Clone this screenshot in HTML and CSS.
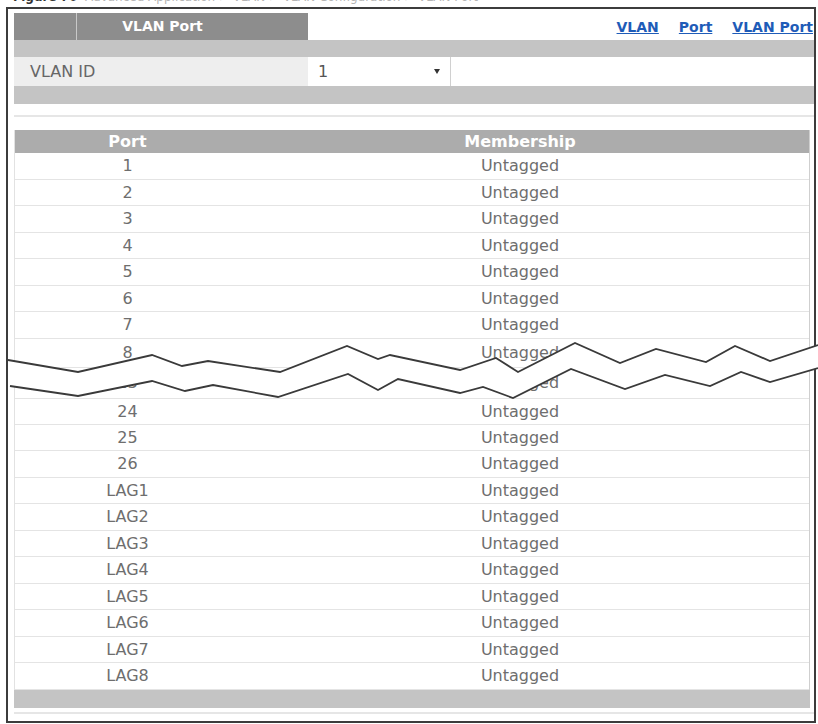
FILE: index.html
```html
<!DOCTYPE html>
<html lang="en">
<head>
<meta charset="UTF-8" />
<meta name="viewport" content="width=device-width, initial-scale=1" />
<title>VLAN Port</title>
<link rel="stylesheet" href="styles.css">
</head>
<body>
<div class="page">

  <!-- figure caption, cut off at the top -->
  <div class="caption"><p><b>Figure 70</b>&nbsp;&nbsp;Advanced Application &gt; VLAN &gt; VLAN Configuration &gt; VLAN Port</p></div>

  <div class="frame">
    <div class="top-row">
      <div class="tab"><span class="tab-edge"></span><span class="tab-title">VLAN Port</span></div>
      <nav class="links">
        <a href="#">VLAN</a>
        <a href="#">Port</a>
        <a href="#">VLAN Port</a>
      </nav>
    </div>
    <div class="bar"></div>

    <div class="vlan-row">
      <div class="vlan-label">VLAN ID</div>
      <div class="vlan-select"><span>1</span><i class="arrow"></i></div>
      <div class="vlan-rest"></div>
    </div>
    <div class="bar"></div>

    <div class="divider"></div>

    <div class="ports">
      <div class="row head"><div>Port</div><div>Membership</div></div>
      <div class="row"><div>1</div><div>Untagged</div></div>
      <div class="row"><div>2</div><div>Untagged</div></div>
      <div class="row"><div>3</div><div>Untagged</div></div>
      <div class="row"><div>4</div><div>Untagged</div></div>
      <div class="row"><div>5</div><div>Untagged</div></div>
      <div class="row"><div>6</div><div>Untagged</div></div>
      <div class="row"><div>7</div><div>Untagged</div></div>
      <div class="row tall"><div>8</div><div>Untagged</div></div>
      <div class="row taller"><div>23</div><div>Untagged</div></div>
      <div class="row mid"><div>24</div><div>Untagged</div></div>
      <div class="row"><div>25</div><div>Untagged</div></div>
      <div class="row"><div>26</div><div>Untagged</div></div>
      <div class="row"><div>LAG1</div><div>Untagged</div></div>
      <div class="row"><div>LAG2</div><div>Untagged</div></div>
      <div class="row"><div>LAG3</div><div>Untagged</div></div>
      <div class="row"><div>LAG4</div><div>Untagged</div></div>
      <div class="row"><div>LAG5</div><div>Untagged</div></div>
      <div class="row"><div>LAG6</div><div>Untagged</div></div>
      <div class="row"><div>LAG7</div><div>Untagged</div></div>
      <div class="row"><div>LAG8</div><div>Untagged</div></div>
    </div>
    <div class="bar short"></div>
    <div class="foot-line"></div>
  </div>

  <!-- torn-page break over the rows -->
  <svg class="break" width="818" height="80" viewBox="0 330 818 80">
    <polygon fill="#fff" points="8,360 78,372 152,355 182,366 208,361 280,372 347,346 378,359 390,355 460,370 496,358 518,372 575,343 620,363 656,349 706,362 735,346 770,361 818,345 818,368 770,382 741,372 710,386 665,375 625,389 571,369 513,398 483,387 460,393 398,379 378,390 348,374 278,397 213,385 185,391 152,381 78,396 10,386" />
    <polyline fill="none" stroke="#3a3a3a" stroke-width="1.8" points="8,360 78,372 152,355 182,366 208,361 280,372 347,346 378,359 390,355 460,370 496,358 518,372 575,343 620,363 656,349 706,362 735,346 770,361 818,345" />
    <polyline fill="none" stroke="#3a3a3a" stroke-width="1.8" points="10,386 78,396 152,381 185,391 213,385 278,397 348,374 378,390 398,379 460,393 483,387 513,398 571,369 625,389 665,375 710,386 741,372 770,382 818,368" />
  </svg>

</div>
</body>
</html>
```

FILE: styles.css
```css
/* Reset */
* {
  margin: 0; padding: 0; box-sizing: border-box;
}

body {
  font-family: "DejaVu Sans", Verdana, sans-serif;
  background: #fff;
  color: #666;
}

.page {
  position: relative;
  width: 818px;
  height: 724px;
  overflow: hidden;
}

/* caption above the screenshot, only its bottom shows */
.caption {
  height: 7px;
  overflow: hidden;
  padding-left: 13px;
}

.caption p {
  margin-top: -10px;
  font-size: 12px;
  line-height: 14px;
  color: #b5b5b5;
  white-space: nowrap;
}

.caption b {
  color: #333;
}

.frame {
  margin: 0 2px 0 6px;
  border: 2px solid #3c3c3c;
  padding: 4px 0 7px 6px;
}

/* tab + links */
.top-row {
  display: flex;
  justify-content: space-between;
  align-items: center;
  height: 27px;
}

.tab {
  display: flex;
  width: 294px;
  height: 27px;
  background: #8d8d8d;
}

.tab-edge {
  width: 63px;
  border-right: 1px solid #c9c9c9;
}

.tab-title {
  flex: 1;
  padding-right: 60px;
  text-align: center;
  line-height: 27px;
  font-size: 14px;
  font-weight: bold;
  color: #fff;
}

.links {
  display: flex;
  gap: 20px;
  padding-right: 1px;
}

.links a {
  font-size: 14px;
  font-weight: bold;
  color: #1f5cb8;
  text-decoration: underline;
}

.bar {
  height: 17px;
  background: #c4c4c4;
}

.bar + .divider {
  margin-top: 11px;
}

.vlan-row + .bar {
  height: 18px;
}

.bar.short {
  height: 18px;
  margin-right: 4px;
}

/* VLAN ID select row */
.vlan-row {
  display: flex;
  height: 29px;
}

.vlan-label {
  width: 294px;
  background: #eeeeee;
  padding-left: 16px;
  line-height: 29px;
  font-size: 16px;
  color: #666;
}

.vlan-select {
  width: 143px;
  display: flex;
  align-items: center;
  justify-content: space-between;
  padding: 0 10px 0 10px;
  border-right: 1px solid #d0d0d0;
  font-size: 16px;
  color: #555;
}

.arrow {
  width: 0;
  height: 0;
  border-left: 3px solid transparent;
  border-right: 3px solid transparent;
  border-top: 5px solid #333;
}

.vlan-rest {
  flex: 1;
  background: #fff;
}

.divider {
  height: 2px;
  background: #e6e6e6;
  margin-bottom: 13px;
}

/* port table */
.ports {
  margin-right: 4px;
  border-left: 1px solid #e2e2e2;
  border-right: 1px solid #cfcfcf;
}

.row {
  display: grid;
  grid-template-columns: 225px 560px 1fr;
  align-items: center;
  height: 26.5px;
  border-bottom: 1px solid #e4e4e4;
  font-size: 16px;
  color: #6e6e6e;
}

.row div {
  text-align: center;
}

.row.head {
  height: 23px;
  background: #acacac;
  border-bottom: none;
  color: #fff;
  font-weight: bold;
}

.row.tall {
  height: 29px;
}

.row.taller {
  height: 31px;
}

.row.mid {
  height: 26px;
}

.foot-line {
  height: 2px;
  margin-top: 4px;
  background: #e6e6e6;
}

.break {
  position: absolute;
  top: 330px;
  left: 0;
}
```
